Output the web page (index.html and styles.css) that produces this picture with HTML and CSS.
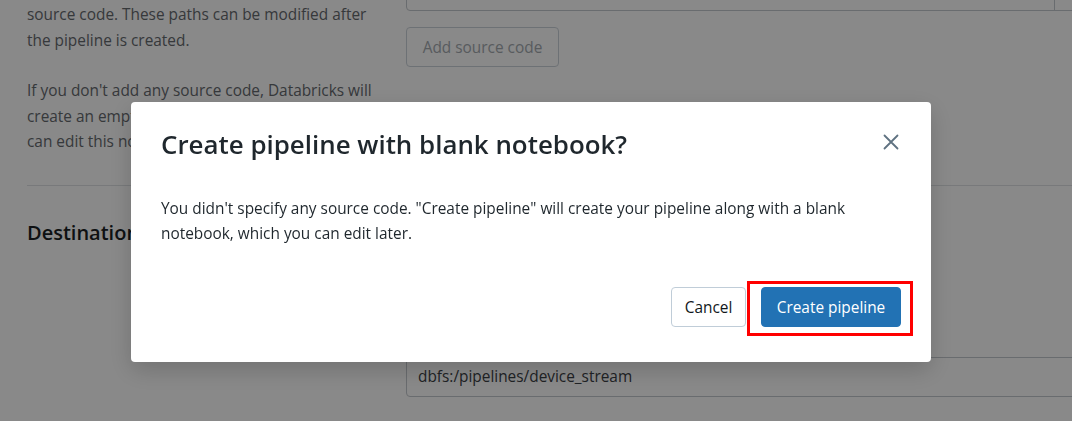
FILE: index.html
```html
<!DOCTYPE html>
<html lang="en">
<head>
<meta charset="utf-8">
<title>Create pipeline</title>
<link rel="stylesheet" href="styles.css">
</head>
<body>
<div class="page">
  <section class="row row-source">
    <div class="col-left">
      <p class="help">source code. These paths can be modified after<br>the pipeline is created.</p>
      <p class="help">If you don't add any source code, Databricks will<br>create an empty notebook for the pipeline. You<br>can edit this notebook later.</p>
    </div>
    <div class="col-right">
      <div class="input-group top-input">
        <div class="input-field"></div>
        <div class="input-addon"></div>
      </div>
      <button class="btn-secondary" disabled>Add source code</button>
    </div>
  </section>
  <hr class="divider">
  <section class="row row-dest">
    <div class="col-left">
      <h2 class="section-title">Destination</h2>
    </div>
    <div class="col-right">
      <div class="spacer"></div>
      <div class="text-input">dbfs:/pipelines/device_stream</div>
    </div>
  </section>
</div>

<div class="overlay">
  <div class="modal" role="dialog" aria-modal="true">
    <div class="modal-header">
      <h1 class="modal-title">Create pipeline with blank notebook?</h1>
      <button class="close-btn" aria-label="Close">
        <svg width="16" height="16" viewBox="0 0 16 16"><path d="M1.5 1.5 L14.5 14.5 M14.5 1.5 L1.5 14.5" stroke="#5f7281" stroke-width="1.8" stroke-linecap="round" fill="none"/></svg>
      </button>
    </div>
    <div class="modal-body">You didn't specify any source code. "Create pipeline" will create your pipeline along with a blank<br>notebook, which you can edit later.</div>
    <div class="modal-footer">
      <button class="btn btn-default">Cancel</button>
      <button class="btn btn-primary">Create pipeline<span class="highlight"></span></button>
    </div>
  </div>
</div>
</body>
</html>
```

FILE: styles.css
```css
html, body {
  margin: 0;
  padding: 0;
  height: 100%;
  overflow: hidden;
}
body {
  font-family: "Open Sans", "Noto Sans", sans-serif;
  background: #ffffff;
  color: #11171c;
}
.page {
  width: 1300px;
}
.row {
  display: flex;
  padding-left: 27px;
}
.col-left {
  width: 345px;
  flex: none;
}
.col-right {
  margin-left: 34px;
  width: 760px;
  flex: none;
}
.help {
  margin: 0 0 25px;
  font-size: 15.4px;
  line-height: 25.5px;
  color: #666a6f;
  white-space: nowrap;
}
.row-source .col-left {
  padding-top: 2px;
}
.top-input {
  display: flex;
  height: 30px;
  margin-top: -21px;
  border: 1px solid #c4c9ce;
  border-radius: 4px;
}
.input-field {
  width: 647px;
  border-right: 1px solid #c4c9ce;
}
.input-addon {
  flex: 1;
}
.btn-secondary {
  display: block;
  margin-top: 16px;
  width: 153px;
  height: 40px;
  border: 1px solid #ccd3da;
  border-radius: 4px;
  background: #fff;
  font-family: "Open Sans", "Noto Sans", sans-serif;
  font-size: 15.4px;
  color: #a4aab0;
  padding: 0;
}
.divider {
  margin: 0 0 0 27px;
  height: 0;
  border: none;
  border-top: 1px solid #dfe2e5;
}
.row-source {
  height: 185px;
}
.section-title {
  margin: 32px 0 0;
  font-size: 20px;
  line-height: 30px;
  font-weight: 600;
  color: #1a1f24;
}
.spacer {
  height: 171px;
}
.text-input {
  height: 38px;
  border: 1px solid #c4c9ce;
  border-radius: 4px;
  padding-left: 11px;
  line-height: 38px;
  font-size: 15.4px;
  color: #3c4146;
}

/* overlay + modal */
.overlay {
  position: fixed;
  inset: 0;
  background: rgba(0, 0, 0, 0.462);
  display: flex;
  align-items: flex-start;
  padding: 102px 0 0 131px;
}
.modal {
  width: 800px;
  box-sizing: border-box;
  background: #ffffff;
  border-radius: 4px;
  box-shadow: 0 8px 24px rgba(0, 0, 0, 0.18);
  padding: 22px 30px 35px 30px;
}
.modal-header {
  display: flex;
  align-items: center;
  justify-content: space-between;
  height: 40px;
}
.modal-title {
  margin: 0;
  font-size: 25.9px;
  line-height: 40px;
  font-weight: 600;
  color: #1f272d;
  white-space: nowrap;
}
.close-btn {
  width: 24px;
  height: 24px;
  margin: -4px -2px 0 0;
  padding: 0;
  border: none;
  background: transparent;
  display: flex;
  align-items: center;
  justify-content: center;
}
.modal-body {
  margin-top: 32px;
  font-size: 15.4px;
  line-height: 25px;
  color: #1f272d;
  white-space: nowrap;
}
.modal-footer {
  display: flex;
  justify-content: flex-end;
  gap: 15px;
  margin-top: 41px;
}
.btn {
  height: 40px;
  border-radius: 4px;
  font-family: "Open Sans", "Noto Sans", sans-serif;
  font-size: 15.4px;
  padding: 0;
  position: relative;
}
.btn-default {
  width: 75px;
  background: #fff;
  border: 1px solid #c0cdd8;
  color: #11171c;
}
.btn-primary {
  width: 140px;
  background: #2272b4;
  border: 1px solid #2272b4;
  color: #ffffff;
}
.highlight {
  position: absolute;
  left: -15px;
  right: -13px;
  top: -7px;
  bottom: -10px;
  border: 3px solid #ff0000;
  pointer-events: none;
}
```
